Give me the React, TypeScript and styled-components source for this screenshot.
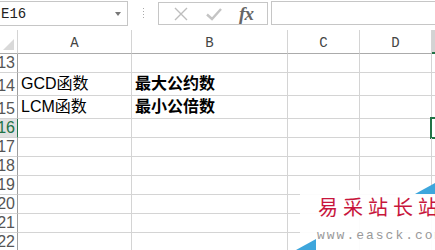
import React from "react";
import styled, { createGlobalStyle } from "styled-components";

const Global = createGlobalStyle`
  html, body { margin: 0; padding: 0; background: #fff; }
  body { width: 435px; height: 250px; overflow: hidden; font-family: "Liberation Sans", "Noto Sans CJK SC", sans-serif; }
`;

const Page = styled.div`
  position: relative;
  width: 435px;
  height: 250px;
  overflow: hidden;
  background: #fff;
`;

const FormulaBar = styled.div`
  display: flex;
  align-items: flex-start;
  height: 30px;
  box-sizing: border-box;
  padding-top: 1px;
`;

const NameBox = styled.div`
  box-sizing: border-box;
  width: 128px;
  height: 25px;
  border: 1px solid #c6c6c6;
  border-left: none;
  display: flex;
  align-items: center;
  justify-content: space-between;
  padding: 0 6px 0 1px;
  font-family: "Liberation Mono", monospace;
  font-size: 14px;
  color: #222;
`;

const DropArrow = styled.span`
  width: 0;
  height: 0;
  border-left: 3.5px solid transparent;
  border-right: 3.5px solid transparent;
  border-top: 4px solid #777;
`;

const Grip = styled.div`
  width: 30px;
  height: 24px;
  display: flex;
  justify-content: center;
  align-items: center;
  &::before {
    content: "";
    width: 1px;
    height: 11px;
    background: repeating-linear-gradient(to bottom, #aaa 0 1px, transparent 1px 3px);
  }
`;

const ButtonBox = styled.div`
  box-sizing: border-box;
  width: 110px;
  height: 23px;
  margin-top: 1px;
  border: 1px solid #c6c6c6;
  display: flex;
  align-items: center;
  justify-content: space-around;
  padding: 0 6px;
`;

const FxText = styled.span`
  font-family: "Liberation Serif", serif;
  font-style: italic;
  font-weight: bold;
  font-size: 19px;
  color: #666;
  letter-spacing: -1px;
  line-height: 1;
`;

const FormulaInput = styled.div`
  flex: 1;
  box-sizing: border-box;
  height: 24px;
  margin-left: 3px;
  border: 1px solid #c6c6c6;
  border-right: none;
`;

const Sheet = styled.div`
  display: grid;
  grid-template-columns: 18px 114px 156px 72px 72px 1fr;
`;

const Corner = styled.div`
  box-sizing: border-box;
  height: 24px;
  border-right: 1px solid #d4d4d4;
  border-bottom: 1px solid #ababab;
  position: relative;
  &::after {
    content: "";
    position: absolute;
    right: 3px;
    bottom: 3px;
    width: 11px;
    height: 11px;
    background: #d9d9d9;
    clip-path: polygon(100% 0, 100% 100%, 0 100%);
  }
`;

const ColHeader = styled.div<{ $active?: boolean }>`
  box-sizing: border-box;
  height: 24px;
  border-right: 1px solid #d4d4d4;
  border-bottom: ${(p) => (p.$active ? "2px solid #217346" : "1px solid #ababab")};
  background: ${(p) => (p.$active ? "#d3d3d3" : "#fff")};
  display: flex;
  align-items: center;
  justify-content: center;
  font-family: "Liberation Mono", monospace;
  font-size: 14px;
  color: #444;
  padding-top: 2px;
`;

const RowHeader = styled.div<{ $h: number; $active?: boolean }>`
  box-sizing: border-box;
  height: ${(p) => p.$h}px;
  border-right: ${(p) => (p.$active ? "1px solid #217346" : "1px solid #9e9e9e")};
  border-bottom: 1px solid #d4d4d4;
  background: ${(p) => (p.$active ? "#e1e1e1" : "#fff")};
  display: flex;
  align-items: flex-end;
  justify-content: flex-end;
  overflow: hidden;
  padding-right: 2px;
  font-family: "Liberation Sans", sans-serif;
  font-size: 16px;
  line-height: 18px;
  color: ${(p) => (p.$active ? "#217346" : "#555")};
`;

const Cell = styled.div<{ $h: number; $bold?: boolean; $selected?: boolean }>`
  box-sizing: border-box;
  height: ${(p) => p.$h}px;
  border-right: 1px solid #d4d4d4;
  border-bottom: 1px solid #d4d4d4;
  display: flex;
  align-items: flex-end;
  padding: 0 0 1px 3px;
  white-space: nowrap;
  overflow: visible;
  font-family: "Liberation Sans", "Noto Sans CJK SC", sans-serif;
  font-size: 16px;
  line-height: 20px;
  font-weight: ${(p) => (p.$bold ? 700 : 400)};
  color: #000;
  position: relative;
  ${(p) =>
    p.$selected
      ? `&::after { content: ""; position: absolute; left: -2px; top: -2px; right: -4px; bottom: -2px; border: 2px solid #217346; }`
      : ""}
`;

const Watermark = styled.div`
  position: absolute;
  left: 296px;
  top: 183px;
  width: 139px;
  height: 67px;
  &::before {
    content: "";
    position: absolute;
    left: 4px;
    top: 7px;
    right: 0;
    bottom: 0;
    background: rgba(255, 255, 255, 0.93);
  }
`;

const Tri = styled.span<{ $pos: "tr" | "bl" }>`
  position: absolute;
  width: 20px;
  height: 11px;
  background: #3ea6dc;
  ${(p) =>
    p.$pos === "tr"
      ? "right: 0; top: 0; clip-path: polygon(100% 0, 100% 100%, 0 100%);"
      : "left: 0; bottom: 0; clip-path: polygon(100% 0, 100% 100%, 0 100%);"}
`;

const WmTitle = styled.div`
  position: absolute;
  left: 22px;
  top: 12px;
  font-family: "Noto Sans CJK SC", sans-serif;
  font-size: 20px;
  line-height: 24px;
  letter-spacing: 5px;
  color: #c8163c;
  white-space: nowrap;
`;

const WmUrl = styled.div`
  position: absolute;
  left: 21px;
  top: 45px;
  font-family: "Liberation Mono", monospace;
  font-size: 13px;
  line-height: 16px;
  letter-spacing: 2px;
  color: #999;
  white-space: nowrap;
`;

const rows: { n: number; h: number; a?: string; b?: string }[] = [
  { n: 13, h: 19 },
  { n: 14, h: 23, a: "GCD函数", b: "最大公约数" },
  { n: 15, h: 23, a: "LCM函数", b: "最小公倍数" },
  { n: 16, h: 19 },
  { n: 17, h: 19 },
  { n: 18, h: 19 },
  { n: 19, h: 19 },
  { n: 20, h: 19 },
  { n: 21, h: 19 },
  { n: 22, h: 19 },
];

export default function App() {
  return (
    <Page>
      <Global />
      <FormulaBar>
        <NameBox>
          <span>E16</span>
          <DropArrow />
        </NameBox>
        <Grip />
        <ButtonBox>
          <svg width="16" height="16" viewBox="0 0 16 16">
            <path d="M2 2 L14 14 M14 2 L2 14" stroke="#bdbdbd" strokeWidth="1.4" fill="none" />
          </svg>
          <svg width="18" height="16" viewBox="0 0 18 16">
            <path d="M2 8.5 L7 13 L16 3" stroke="#c4c4c4" strokeWidth="2.4" fill="none" />
          </svg>
          <FxText>fx</FxText>
        </ButtonBox>
        <FormulaInput />
      </FormulaBar>
      <Sheet>
        <Corner />
        <ColHeader>A</ColHeader>
        <ColHeader>B</ColHeader>
        <ColHeader>C</ColHeader>
        <ColHeader>D</ColHeader>
        <ColHeader $active />
        {rows.map((r) => (
          <React.Fragment key={r.n}>
            <RowHeader $h={r.h} $active={r.n === 16}>
              {r.n}
            </RowHeader>
            <Cell $h={r.h}>{r.a}</Cell>
            <Cell $h={r.h} $bold>
              {r.b}
            </Cell>
            <Cell $h={r.h} />
            <Cell $h={r.h} />
            <Cell $h={r.h} $selected={r.n === 16} />
          </React.Fragment>
        ))}
      </Sheet>
      <Watermark>
        <Tri $pos="tr" />
        <Tri $pos="bl" />
        <WmTitle>易采站长站</WmTitle>
        <WmUrl>www.easck.com</WmUrl>
      </Watermark>
    </Page>
  );
}
